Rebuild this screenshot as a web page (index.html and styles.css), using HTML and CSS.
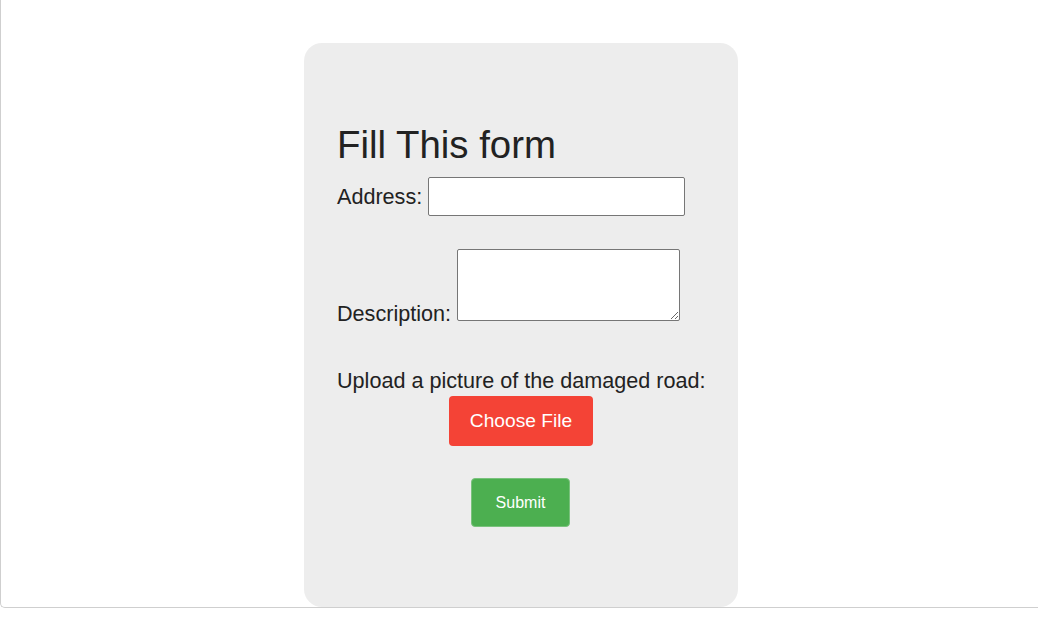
FILE: index.html
```html
<!DOCTYPE html>
<html lang="en">
<head>
<meta charset="utf-8">
<title>Fill This form</title>
<link rel="stylesheet" href="styles.css">
</head>
<body>
<div class="frame">
  <form class="card">
    <h1 class="title">Fill This form</h1>
    <div class="row row-address">
      <label for="address">Address:</label> <input id="address" class="field" type="text">
    </div>
    <div class="row row-desc">
      <label for="desc">Description:</label> <textarea id="desc" class="area"></textarea>
    </div>
    <div class="upload">Upload a picture of the damaged road:</div>
    <div class="center">
      <span class="choose">Choose File</span>
    </div>
    <div class="center">
      <button type="button" class="submit">Submit</button>
    </div>
  </form>
</div>
</body>
</html>
```

FILE: styles.css
```css
html, body {
  margin: 0;
  padding: 0;
  background: #ffffff;
}

body {
  font-family: "Liberation Sans", Arial, sans-serif;
  color: #222222;
}

.frame {
  box-sizing: border-box;
  height: 608px;
  width: 1038px;
  border-left: 1px solid #cfcfcf;
  border-bottom: 1px solid #cfcfcf;
  border-bottom-left-radius: 5px;
  padding-top: 43px;
  display: flex;
  justify-content: flex-start;
}

.card {
  box-sizing: border-box;
  margin-left: 303px;
  width: 434px;
  height: 564px;
  background: #ededed;
  border-radius: 18px;
  padding: 80px 0 0 33px;
}

.title {
  margin: 0;
  font-size: 38.4px;
  line-height: 44px;
  font-weight: normal;
}

.row {
  font-size: 21.6px;
}

.row-address {
  margin-top: 10px;
}

.row-desc {
  margin-top: 33px;
}

.field {
  box-sizing: border-box;
  width: 257px;
  height: 39px;
  margin: 0;
  font-size: 21.6px;
  font-family: inherit;
  border: 1px solid #767676;
  border-radius: 2px;
  background: #fff;
  vertical-align: baseline;
}

.area {
  box-sizing: border-box;
  width: 223px;
  height: 72px;
  margin: 0;
  border: 1px solid #767676;
  border-radius: 2px;
  background: #fff;
  display: inline-block;
  vertical-align: baseline;
  font-family: inherit;
}

.upload {
  margin-top: 42px;
  font-size: 21.6px;
  line-height: 24px;
}

.center {
  width: 368px;
  text-align: center;
}

.choose {
  display: inline-block;
  box-sizing: border-box;
  margin-top: 3px;
  width: 144px;
  height: 50px;
  line-height: 50px;
  background: #f44336;
  color: #ffffff;
  font-size: 19.2px;
  border-radius: 4px;
  vertical-align: top;
}

.submit {
  box-sizing: border-box;
  margin: 32px 0 0 -1px;
  width: 99px;
  height: 49px;
  padding: 0;
  background: #4caf50;
  border: 1px solid #79c27c;
  border-radius: 4px;
  color: #ffffff;
  font-family: "Liberation Sans", Arial, sans-serif;
  font-size: 16px;
  vertical-align: top;
}
```
